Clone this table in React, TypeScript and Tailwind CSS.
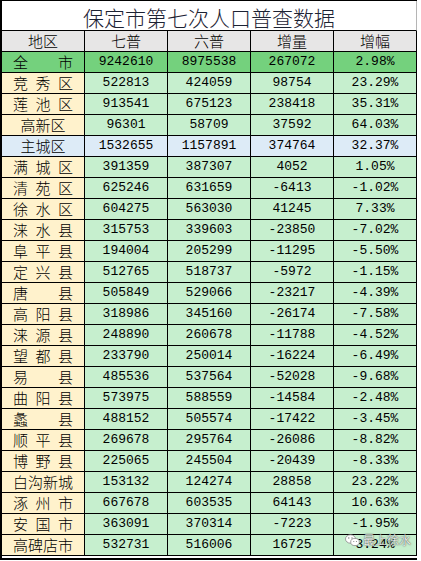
import * as React from "react";

type Row = {
  name: string;
  qi: string;
  liu: string;
  zeng: string;
  fu: string;
  kind?: "total" | "core" | "center";
};

const ROWS: Row[] = [
  { name: "全市", qi: "9242610", liu: "8975538", zeng: "267072", fu: "2.98%", kind: "total" },
  { name: "竞秀区", qi: "522813", liu: "424059", zeng: "98754", fu: "23.29%" },
  { name: "莲池区", qi: "913541", liu: "675123", zeng: "238418", fu: "35.31%" },
  { name: "高新区", qi: "96301", liu: "58709", zeng: "37592", fu: "64.03%", kind: "center" },
  { name: "主城区", qi: "1532655", liu: "1157891", zeng: "374764", fu: "32.37%", kind: "core" },
  { name: "满城区", qi: "391359", liu: "387307", zeng: "4052", fu: "1.05%" },
  { name: "清苑区", qi: "625246", liu: "631659", zeng: "-6413", fu: "-1.02%" },
  { name: "徐水区", qi: "604275", liu: "563030", zeng: "41245", fu: "7.33%" },
  { name: "涞水县", qi: "315753", liu: "339603", zeng: "-23850", fu: "-7.02%" },
  { name: "阜平县", qi: "194004", liu: "205299", zeng: "-11295", fu: "-5.50%" },
  { name: "定兴县", qi: "512765", liu: "518737", zeng: "-5972", fu: "-1.15%" },
  { name: "唐县", qi: "505849", liu: "529066", zeng: "-23217", fu: "-4.39%" },
  { name: "高阳县", qi: "318986", liu: "345160", zeng: "-26174", fu: "-7.58%" },
  { name: "涞源县", qi: "248890", liu: "260678", zeng: "-11788", fu: "-4.52%" },
  { name: "望都县", qi: "233790", liu: "250014", zeng: "-16224", fu: "-6.49%" },
  { name: "易县", qi: "485536", liu: "537564", zeng: "-52028", fu: "-9.68%" },
  { name: "曲阳县", qi: "573975", liu: "588559", zeng: "-14584", fu: "-2.48%" },
  { name: "蠡县", qi: "488152", liu: "505574", zeng: "-17422", fu: "-3.45%" },
  { name: "顺平县", qi: "269678", liu: "295764", zeng: "-26086", fu: "-8.82%" },
  { name: "博野县", qi: "225065", liu: "245504", zeng: "-20439", fu: "-8.33%" },
  { name: "白沟新城", qi: "153132", liu: "124274", zeng: "28858", fu: "23.22%" },
  { name: "涿州市", qi: "667678", liu: "603535", zeng: "64143", fu: "10.63%" },
  { name: "安国市", qi: "363091", liu: "370314", zeng: "-7223", fu: "-1.95%" },
  { name: "高碑店市", qi: "532731", liu: "516006", zeng: "16725", fu: "3.24%" },
];

const HEADERS = ["地区", "七普", "六普", "增量", "增幅"];

const cjk = "font-['SimSun','Noto_Sans_CJK_SC',sans-serif] font-light";
const mono = "font-['Liberation_Mono','Noto_Sans_CJK_SC',monospace]";

function NameCell({ row }: { row: Row }) {
  const bg =
    row.kind === "total"
      ? "bg-[#74d17d]"
      : row.kind === "core"
        ? "bg-[#ddebf7]"
        : "bg-[#fff2cc]";
  const centered = row.kind === "center" || row.kind === "core";
  return (
    <div
      className={`${bg} ${cjk} flex h-5 items-center px-[11px] text-[15px] leading-5 text-black ${
        centered ? "justify-center" : "justify-between"
      }`}
    >
      {centered
        ? row.name
        : row.name.split("").map((ch, i) => <span key={i}>{ch}</span>)}
    </div>
  );
}

function NumCell({ value, row }: { value: string; row: Row }) {
  const bg =
    row.kind === "total"
      ? "bg-[#74d17d]"
      : row.kind === "core"
        ? "bg-[#ddebf7]"
        : "bg-[#c6efce]";
  return (
    <div
      className={`${bg} ${mono} flex h-5 items-center justify-center text-[13px] leading-5 text-black`}
    >
      {value}
    </div>
  );
}

// 右下角公众号水印
function Watermark() {
  return (
    <div className="absolute left-[345px] top-[533px] flex items-center gap-[3px]">
      <svg width="15" height="13" viewBox="0 0 15 13">
        <ellipse cx="5.5" cy="5" rx="5" ry="4.2" fill="#fff" stroke="#8a8a8a" strokeWidth="0.8" />
        <ellipse cx="10" cy="8" rx="4.3" ry="3.6" fill="#fff" stroke="#8a8a8a" strokeWidth="0.8" />
        <circle cx="3.8" cy="4" r="0.7" fill="#777" />
        <circle cx="7" cy="4" r="0.7" fill="#777" />
        <circle cx="8.8" cy="7.5" r="0.55" fill="#777" />
        <circle cx="11.4" cy="7.5" r="0.55" fill="#777" />
      </svg>
      <span
        className={`${cjk} text-[12px] leading-[14px] text-white [text-shadow:0_0_2px_#555,0_0_1px_#333]`}
      >
        最上徐水
      </span>
    </div>
  );
}

export default function App() {
  return (
    <div className="relative h-[561px] w-[421px] bg-white">
      <div className="flex h-[560px] w-[417px] flex-col border-b-2 border-l-2 border-t border-black">
        <div
          className={`${cjk} flex h-[30px] items-center justify-center border-b border-r border-b-black border-r-[#b5b5b5] pt-[2px] text-[21px] leading-[28px] text-[#1c2233]`}
        >
          保定市第七次人口普查数据
        </div>
        <div className="grid grid-cols-[82px_82px_82px_82px_82px] gap-px bg-black pb-px pr-px">
          {HEADERS.map((h) => (
            <div
              key={h}
              className={`${cjk} flex h-5 items-center justify-center bg-[#e7e6e6] text-[15px] leading-5 text-black`}
            >
              {h}
            </div>
          ))}
          {ROWS.map((row) => (
            <React.Fragment key={row.name}>
              <NameCell row={row} />
              <NumCell value={row.qi} row={row} />
              <NumCell value={row.liu} row={row} />
              <NumCell value={row.zeng} row={row} />
              <NumCell value={row.fu} row={row} />
            </React.Fragment>
          ))}
        </div>
      </div>
      <Watermark />
    </div>
  );
}
